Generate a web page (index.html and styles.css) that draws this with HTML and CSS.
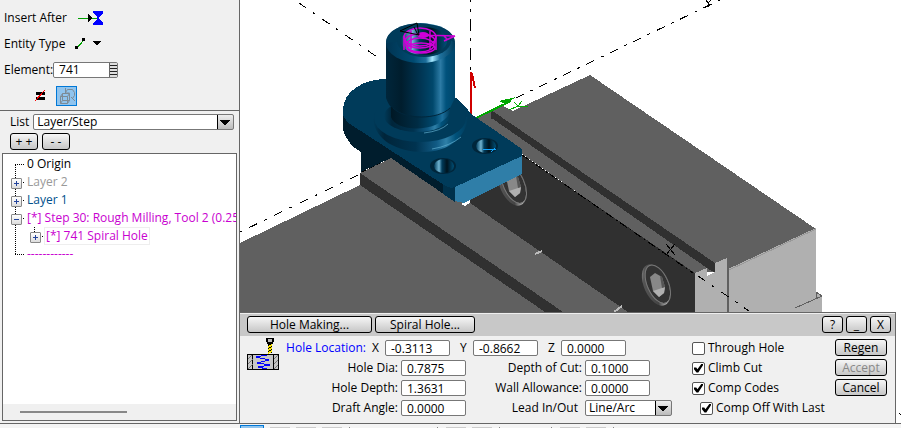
FILE: index.html
```html
<!DOCTYPE html>
<html lang="en">
<head>
<meta charset="utf-8">
<title>Hole Making</title>
<link rel="stylesheet" href="styles.css">
</head>
<body>
<main class="workspace">
  <aside class="sidebar">
    <div class="options">
      <div class="option-row">
        <span class="option-name">Insert After</span>
        <button class="icon-button" aria-label="Insert position">
          <svg width="28" height="16" viewBox="0 0 28 16" shape-rendering="crispEdges"><path d="M2 8h20" stroke="#00a000"/><path d="M12 4l5 4-5 4z" fill="#000"/><path d="M17 1h10v2l-4 4v2l4 4v2H17v-2l4-4V7l-4-4z" fill="#00f"/><path d="M17 8h4" stroke="#00a000"/></svg>
        </button>
      </div>
      <div class="option-row">
        <span class="option-name">Entity Type</span>
        <button class="icon-button" aria-label="Entity type line">
          <svg width="28" height="16" viewBox="0 0 28 16" shape-rendering="crispEdges"><path d="M1 12L8 4" stroke="#00a000"/><path d="M-1 10h3v3h-3zM6 2h3v3H6z" fill="#000"/><path d="M17 5h8l-4 5z" fill="#000"/></svg>
        </button>
      </div>
      <div class="option-row element-row">
        <label for="element">Element:</label>
        <span class="spin"><input id="element" class="field" value="741"><button class="spin-grip" aria-label="Pick element"></button></span>
      </div>
      <div class="option-row tool-row">
        <button class="icon-button" aria-label="Not equal">
          <svg width="12" height="14" viewBox="0 0 12 14" shape-rendering="crispEdges"><path d="M1 3h9v3H1zM1 8h9v3H1z" fill="#000"/><path d="M0 12L10 1" stroke="#f00"/></svg>
        </button>
        <button class="tool-button" aria-label="Rotate view">
          <svg width="19" height="18" viewBox="0 0 19 18" fill="none" stroke="#7d8b96"><path d="M3.500 9.500h7v7h-7zM3.500 9.500l2-3h7l-2 3M12.500 6.500v7l-2 3M5.500 6.500v7h7M5.500 13.500l-2 3M8.500 5.500l2-3h5l2 3v3l-2 3M14 10l4 4M8.500 1v5h4"/></svg>
        </button>
      </div>
    </div>
    <div class="list-bar">
      <label for="list">List</label>
      <select id="list" class="field drop"><option>Layer/Step</option></select>
    </div>
    <div class="expand-bar">
      <button class="push">+ +</button>
      <button class="push">- -</button>
    </div>
    <div class="tree">
      <ul class="tree-list">
        <li><span class="stem first"></span>0 Origin</li>
        <li class="muted"><span class="stem box plus"></span>Layer 2</li>
        <li class="navy"><span class="stem box plus"></span>Layer 1</li>
        <li class="pink"><span class="stem box"></span>[*] Step 30: Rough Milling, Tool 2 (0.2500</li>
        <li class="pink child"><span class="stem through"></span><span class="stem box plus leaf"></span><span class="current">[*] 741 Spiral Hole</span></li>
        <li class="pink"><span class="stem last"></span>------------</li>
      </ul>
      <div class="scroll"><div class="thumb"></div></div>
    </div>
  </aside>

  <section class="viewport">
    <svg class="scene" viewBox="240 0 661 424" preserveAspectRatio="xMinYMin slice" role="img" aria-label="Part held in a vise">
      <defs>
        <linearGradient id="barrel"><stop offset="0" stop-color="#00263b"/><stop offset=".22" stop-color="#001d2d"/><stop offset=".5" stop-color="#003553"/><stop offset=".68" stop-color="#00486c"/><stop offset=".79" stop-color="#2c7ba5"/><stop offset=".87" stop-color="#00527c"/><stop offset="1" stop-color="#00466b"/></linearGradient>
        <linearGradient id="chamfer"><stop offset="0" stop-color="#003452"/><stop offset=".4" stop-color="#004b72"/><stop offset=".58" stop-color="#1d6f9c"/><stop offset=".67" stop-color="#a5e8ff"/><stop offset=".78" stop-color="#20739f"/><stop offset="1" stop-color="#003b5a"/></linearGradient>
        <linearGradient id="neck"><stop offset="0" stop-color="#001825"/><stop offset=".45" stop-color="#002c44"/><stop offset=".75" stop-color="#004a70"/><stop offset=".87" stop-color="#1b6f9c"/><stop offset="1" stop-color="#003b5a"/></linearGradient>
        <linearGradient id="flange"><stop offset="0" stop-color="#003b5a"/><stop offset=".12" stop-color="#00253a"/><stop offset=".45" stop-color="#003350"/><stop offset=".67" stop-color="#115b85"/><stop offset=".77" stop-color="#2f80a8"/><stop offset=".87" stop-color="#00517a"/><stop offset="1" stop-color="#003b5a"/></linearGradient>
        <linearGradient id="bore"><stop offset="0" stop-color="#003b5a"/><stop offset=".25" stop-color="#72b5d3"/><stop offset=".4" stop-color="#003b5a"/><stop offset=".65" stop-color="#00131d"/><stop offset="1" stop-color="#005078"/></linearGradient>
        <linearGradient id="ring" x2="1" y2="1"><stop offset="0" stop-color="#ddd"/><stop offset=".2" stop-color="#555"/><stop offset=".6" stop-color="#444"/><stop offset=".8" stop-color="#bbb"/><stop offset="1" stop-color="#555"/></linearGradient>
        <g id="bolt"><g transform="rotate(-24)"><ellipse rx="12" ry="22" fill="url(#ring)"/><ellipse cx="2" rx="10" ry="20" fill="#333"/><ellipse cx="2" cy="0" rx="10.500" ry="20.500" fill="none" stroke="#777"/></g><path d="M-6-8L-1-12 6-8 9 2 8 8 3 12-3 6z" fill="#888"/><path d="M-3 6L9 2 8 8 3 12z" fill="#b0b0b0"/><path d="M4-9l2 1 3 10-3 1z" fill="#555"/></g>
      </defs>
      <g shape-rendering="crispEdges">
        <!-- fixed jaw -->
        <path d="M470 118L477 117 491 110 503 106 513 111 590 75 816 229 728 270 695 274z" fill="#606060"/>
        <path d="M491 110L715 263v10L707 268 491 119z" fill="#303030"/>
        <path d="M470 119L695 273V312H625L470 203z" fill="#303030"/>
        <path d="M478 116L493 119 707 268 695 273z" fill="#606060"/>
        <path d="M695 273l12-5v8l8-4v-9l12-5v54h-32zM728 269l88-41v84h-88z" fill="#b0b0b0"/>
        <path d="M816 292l6 4v16h-27l21-10z" fill="#b0b0b0"/>
        <path d="M795 308l27-12-6-4v7" fill="none" stroke="#606060"/>
        <path d="M727 258h2v54h-2z" fill="#606060"/>
        <path d="M729 270l87-41" fill="none" stroke="#999"/>
        <!-- moving jaw -->
        <path d="M240 243L360 185V173L391 158 470 203 628 312H240z" fill="#606060"/>
        <path d="M360 173L563 312H545L360 185z" fill="#303030"/>
        <path d="M535 254l7-3M614 312l8-6" stroke="#bbb" stroke-width="2"/>
        <!-- axes -->
        <g fill="none" stroke="#000" stroke-dasharray="9 8 3 8">
          <path d="M299 3L380 59"/>
          <path d="M240 232L362 173" stroke-dashoffset="18"/>
          <path d="M516 98L720 0" stroke-dasharray="9 7 3 7"/>
          <path d="M470.500 0V72" stroke-dasharray="12 7 3 7" stroke-dashoffset="10"/>
          <path d="M522 155L693 273" stroke-dasharray="9 3 2 3"/>
          <path d="M698 276L749 311"/>
        </g>
        <path d="M362 172L392 157" stroke="#000" stroke-dasharray="5 3"/>
        <path d="M666 244l9 11M675 244l-9 11M706 0l2 3 3-3M708 3v4M899 413l2 2" fill="none" stroke="#000"/>
        <path d="M471 116V72" stroke="#d00000" stroke-width="2"/><path d="M472 73l3 15" stroke="#d00000" stroke-width="2"/>
        <path d="M476 118L511 101" stroke="#00a800" stroke-width="2"/><path d="M499 101l17-4-11 7z" fill="#00a800"/><path d="M514 102l4 4h10M518 106l-9 4M518 106l4-5" stroke="#00b000" fill="none"/>
      </g>
      <use href="#bolt" x="656" y="285"/>
      <use href="#bolt" x="512" y="185"/>
      <!-- clamped part -->
      <g shape-rendering="crispEdges">
        <path d="M461 204l9-4v3l-5 3z" fill="#fff"/>
        <path d="M343 107V130C346 140 353 148 361 152V172L391 158 445 195 455 201V180z" fill="#001d2d"/>
        <path d="M443 183L455 187V202L443 194z" fill="#00314b"/>
        <path d="M455 187L522 156V174L464 203 455 201z" fill="#2f7ea8"/>
        <path d="M343 112C342 92 362 79 387 79L456 98 465 106 471 114 522 149V156L455 187Q449 189 444 185L350 124Q343 119 343 112z" fill="#003b5a"/>
      </g>
      <path d="M373 119C375 140 397 152 423 152S466 137 468 117z" fill="url(#flange)"/>
      <ellipse cx="420" cy="118" rx="46" ry="24" fill="#003b5a"/>
      <ellipse cx="417" cy="116" rx="33" ry="16" fill="url(#flange)"/>
      <path d="M391 106V117C395 132 438 134 450 113V103z" fill="url(#neck)"/>
      <path d="M424 133q17-2 24-9M432 149q18-3 29-12" fill="none" stroke="#61aece" opacity=".7"/>
      <path d="M386 43V98C389 106 391 107 393 108 405 119 438 120 450 108L455 98V43z" fill="url(#barrel)"/>
      <path d="M393 108C405 120 438 120 450 108" fill="none" stroke="#00263b"/>
      <ellipse cx="420.500" cy="43" rx="34.500" ry="20" fill="url(#chamfer)"/>
      <path d="M386 43C386 17 455 17 455 43L449 39C446 20 397 22 397 42z" fill="#003b5a"/>
      <ellipse cx="424" cy="41" rx="27" ry="16" fill="#003b5a"/>
      <ellipse cx="424" cy="41" rx="23" ry="14" fill="url(#bore)"/>
      <g fill="none" stroke="#d000d8" stroke-width="1.500">
        <ellipse cx="420" cy="37" rx="16" ry="9"/><ellipse cx="420" cy="41" rx="15" ry="7"/><ellipse cx="420" cy="45" rx="14" ry="7"/><ellipse cx="421" cy="48" rx="14" ry="5"/><path d="M404 36V50M436 36V50M411 31v18M430 31v19M421 35l34 1M455 36l-11 5M444 36l3 3"/>
      </g>
      <ellipse cx="423" cy="35" rx="6" ry="3" fill="#d000d8"/>
      <path d="M400 31L417 23 419 35zM414 27l4 8" fill="none" stroke="#000"/>
      <ellipse cx="443" cy="166" rx="13" ry="8" fill="#00263b"/><ellipse cx="444" cy="166" rx="10" ry="7" fill="url(#bore)"/>
      <ellipse cx="485" cy="146" rx="13" ry="8" fill="#00263b"/><ellipse cx="486" cy="146" rx="10" ry="7" fill="url(#bore)"/>
      <path d="M483 149.500h13M491 152l4-4" stroke="#12a4ff" fill="none"/>
    </svg>

    <form class="dialog">
      <div class="titlebar">
        <button type="button" class="push wide">Hole Making...</button>
        <button type="button" class="push medium">Spiral Hole...</button>
        <span class="spacer"></span>
        <button type="button" class="push small">?</button>
        <button type="button" class="push small">_</button>
        <button type="button" class="push small">X</button>
      </div>
      <div class="dialog-body">
        <svg class="hole-icon" width="33" height="33" viewBox="0 0 33 33" shape-rendering="crispEdges"><path d="M.5 16.500h31v15h-31z" fill="#c6c6c6" stroke="#000"/><path d="M6 17q-2 7 0 14M26 17q2 7 0 14" fill="none" stroke="#000"/><path d="M1 21l4-4M1 26l5-5M1 31l5-5M27 21l4-4M27 26l4-4M27 31l4-4" stroke="#777"/><path d="M20 17L9 19l13 3-12 3 13 2-12 2 9 2" fill="none" stroke="#00f"/><path d="M19 0h8v3l-2 4v8h-4V7l-2-4z" fill="#000"/><path d="M21 1h4v3h-4z" fill="#bbb"/><path d="M21 9l4-2M21 12l4-2M21 15l4-2" stroke="#ffe800" stroke-width="1.500"/></svg>
        <div class="fields">
          <div class="location">
            <span class="heading">Hole Location:</span>
            <label for="x">X</label><input id="x" class="field" value="-0.3113">
            <label for="y">Y</label><input id="y" class="field" value="-0.8662">
            <label for="z">Z</label><input id="z" class="field" value="0.0000">
          </div>
          <div class="pairs">
            <label for="dia">Hole Dia:</label><input id="dia" class="field" value="0.7875">
            <label for="cut">Depth of Cut:</label><input id="cut" class="field" value="0.1000">
            <label for="depth">Hole Depth:</label><input id="depth" class="field" value="1.3631">
            <label for="wall">Wall Allowance:</label><input id="wall" class="field" value="0.0000">
            <label for="draft">Draft Angle:</label><input id="draft" class="field" value="0.0000">
            <label for="lead" class="no-colon">Lead In/Out</label><select id="lead" class="field drop"><option>Line/Arc</option></select>
          </div>
        </div>
        <div class="checks">
          <label><input type="checkbox">Through Hole</label>
          <label><input type="checkbox" checked>Climb Cut</label>
          <label><input type="checkbox" checked>Comp Codes</label>
          <label class="nested"><input type="checkbox" checked>Comp Off With Last</label>
        </div>
        <div class="actions">
          <button type="button" class="push">Regen</button>
          <button type="button" class="push" disabled>Accept</button>
          <button type="button" class="push">Cancel</button>
        </div>
      </div>
    </form>
  </section>
</main>
<footer class="strip">
  <div class="tabs"><span class="tab active"></span><span class="tab"></span><span class="tab"></span><span class="tab"></span></div>
  <div class="tabs empty"></div>
  <div class="tabs"><span class="tab"></span><span class="tab"></span></div>
  <div class="tabs gap"></div>
  <div class="tabs"><span class="tab"></span><span class="tab"></span></div>
</footer>
</body>
</html>
```
FILE: styles.css
```css
* { box-sizing: border-box; }
body {
  margin: 0;
  height: 100vh;
  display: flex;
  flex-direction: column;
  overflow: hidden;
  background: #f0f0f0;
  color: #000;
  font: 12px/18px "Open Sans", "Noto Sans", sans-serif;
}
button, input, select { font: inherit; color: inherit; margin: 0; }
.workspace {
  flex: 1;
  min-height: 0;
  display: grid;
  grid-template-columns: 240px 1fr;
  border-bottom: 1px solid #666;
}

/* sidebar */
.sidebar {
  display: flex;
  flex-direction: column;
  min-width: 0;
  min-height: 0;
  border-right: 1px solid #666;
}
.options { padding: 5px 4px 1px; border-bottom: 1px solid #666; }
.option-row { display: flex; align-items: center; height: 26px; }
.option-name { width: 72px; white-space: nowrap; }
.icon-button { border: 0; padding: 0; background: none; display: flex; }
.icon-button svg { overflow: visible; }
.spin { display: flex; width: 65px; height: 16px; border: 1px solid #777; border-radius: 2px; background: #fff; }
.spin .field { flex: 1; min-width: 0; height: 14px; border: 0; }
.spin-grip {
  width: 8px;
  padding: 0;
  border: 0;
  border-left: 1px solid #666;
  background: repeating-linear-gradient(#ddd 0 2px, #222 2px 3px);
}
.tool-row { padding-left: 31px; gap: 9px; }
.tool-button {
  width: 21px;
  height: 20px;
  padding: 0;
  border: 1px solid #0078d7;
  background: #90c4ee;
  display: flex;
}
.list-bar { display: flex; align-items: center; gap: 4px; padding: 2px 5px 0 10px; }
.list-bar .drop { flex: 1; min-width: 0; }
.expand-bar { display: flex; gap: 4px; padding: 2px 10px 3px; }
.expand-bar .push { width: 28px; }

/* shared controls */
.field {
  height: 16px;
  padding: 0 5px;
  border: 1px solid #777;
  border-radius: 2px;
  background: #fff;
  line-height: 14px;
  outline: 0;
}
.drop {
  appearance: none;
  padding: 0 18px 0 3px;
  background:
    conic-gradient(from -45deg at 50% 100%, #000 90deg, transparent 0) right 3px top 5px / 10px 5px no-repeat,
    linear-gradient(#000, #000) right 15px top / 1px 100% no-repeat,
    linear-gradient(#eee, #bbb) right / 15px 100% no-repeat,
    #fff;
}
.push {
  height: 17px;
  padding: 0;
  border: 1px solid #000;
  border-radius: 3px;
  background: linear-gradient(#f6f6f6, #c6c6c6);
  line-height: 15px;
  text-align: center;
  white-space: nowrap;
}
.push:disabled { color: #888; }

/* tree */
.tree {
  flex: 1;
  min-height: 0;
  margin: 0 2px 2px;
  border: 1px solid #666;
  background: #fff;
  display: flex;
  flex-direction: column;
  overflow: hidden;
}
.tree-list { flex: 1; margin: 0; padding: 1px 0 0 8px; list-style: none; overflow: hidden; }
.tree-list li { display: flex; align-items: center; height: 18px; white-space: pre; }
.stem {
  flex: none;
  position: relative;
  width: 16px;
  height: 18px;
  background:
    repeating-linear-gradient(90deg, #000 0 1px, transparent 1px 2px) 4px 9px / 9px 1px no-repeat,
    repeating-linear-gradient(#000 0 1px, transparent 1px 2px) 4px 0 / 1px 100% no-repeat;
}
.stem.first { background-position: 4px 9px, 4px 10px; }
.stem.last { background-size: 9px 1px, 1px 9px; }
.stem.through { width: 19px; background-size: 0 0, 1px 100%; }
.stem.box::before {
  content: "";
  position: absolute;
  left: 0;
  top: 5px;
  width: 9px;
  height: 9px;
  border: 1px solid #888;
  border-radius: 1px;
  background:
    linear-gradient(#24449c, #24449c) center / 5px 1px no-repeat,
    linear-gradient(#fff, #ddd);
}
.stem.plus::before {
  background:
    linear-gradient(#24449c, #24449c) center / 5px 1px no-repeat,
    linear-gradient(#24449c, #24449c) center / 1px 5px no-repeat,
    linear-gradient(#fff, #ddd);
}
.stem.leaf { width: 14px; background-size: 9px 1px, 1px 9px; }
.current { border: 1px solid #eee; line-height: 16px; padding: 0 1px; }
.muted { color: #999; }
.navy { color: #00508c; }
.pink { color: #c800d0; }
.scroll { height: 16px; padding: 7px 109px 0 17px; background: #f0f0f0; }
.thumb { height: 2px; background: #888; }

/* viewport */
.viewport { position: relative; min-width: 0; background: #fff; overflow: hidden; }
.scene { position: absolute; inset: 0; width: 100%; height: 100%; }
.dialog {
  position: absolute;
  left: 0;
  right: 5px;
  bottom: 0;
  border: 1px solid #666;
  border-width: 1px 1px 0 0;
  background: #f0f0f0;
}
.titlebar {
  display: flex;
  gap: 3px;
  padding: 2px 4px 3px 7px;
  border-top: 1px solid #eee;
  background: #c8c8c8;
}
.spacer { flex: 1; }
.wide { width: 125px; }
.medium { width: 100px; }
.small { width: 21px; }
.dialog-body { display: flex; padding: 2px 8px 5px 7px; }
.hole-icon { flex: none; margin-right: 5px; }
.location { display: flex; align-items: center; height: 20px; gap: 3px; }
.location .heading { width: 81px; margin-right: 3px; text-align: right; color: #00f; white-space: nowrap; }
.location label { width: 10px; }
.location .field { width: 65px; margin-right: 7px; }
.location .field:last-child { margin-right: 0; }
.pairs {
  display: grid;
  grid-template-columns: 113px 65px 113px 87px;
  grid-auto-rows: 20px;
  column-gap: 3px;
  align-items: center;
}
.pairs label { text-align: right; white-space: nowrap; }
.pairs .no-colon { padding-right: 4px; }
.pairs .field { width: 65px; }
.pairs .drop { width: 87px; }
.checks { flex: 1; padding-left: 20px; }
.checks label { display: flex; align-items: center; gap: 3px; height: 20px; white-space: nowrap; }
.checks .nested { padding-left: 8px; }
.checks input {
  appearance: none;
  width: 13px;
  height: 13px;
  border: 1px solid #555;
  border-radius: 2px;
  background: #fff;
  display: grid;
  place-items: center;
}
.checks input:checked::before {
  content: "";
  width: 9px;
  height: 9px;
  background: #000;
  clip-path: polygon(0 45%, 25% 45%, 38% 65%, 85% 0, 100% 0, 100% 20%, 48% 100%, 28% 100%, 0 65%);
}
.actions { display: flex; flex-direction: column; gap: 3px; padding-top: 1px; }
.actions .push { width: 52px; }

/* docked strip */
.strip { height: 4px; padding: 1px 0 0 240px; display: flex; background: #f4f4f4; }
.tabs {
  display: flex;
  gap: 6px;
  padding-right: 8px;
  margin-right: 8px;
  background: linear-gradient(#888, #888) right bottom / 1px 1px no-repeat;
}
.tabs.empty { width: 80px; }
.tabs.gap { width: 44px; }
.tab { width: 20px; margin-top: 2px; background: #ccc; }
.tab.active { width: 24px; margin: 0; border: 1px solid #0078d7; border-bottom: 0; background: #90c4ee; }
```
